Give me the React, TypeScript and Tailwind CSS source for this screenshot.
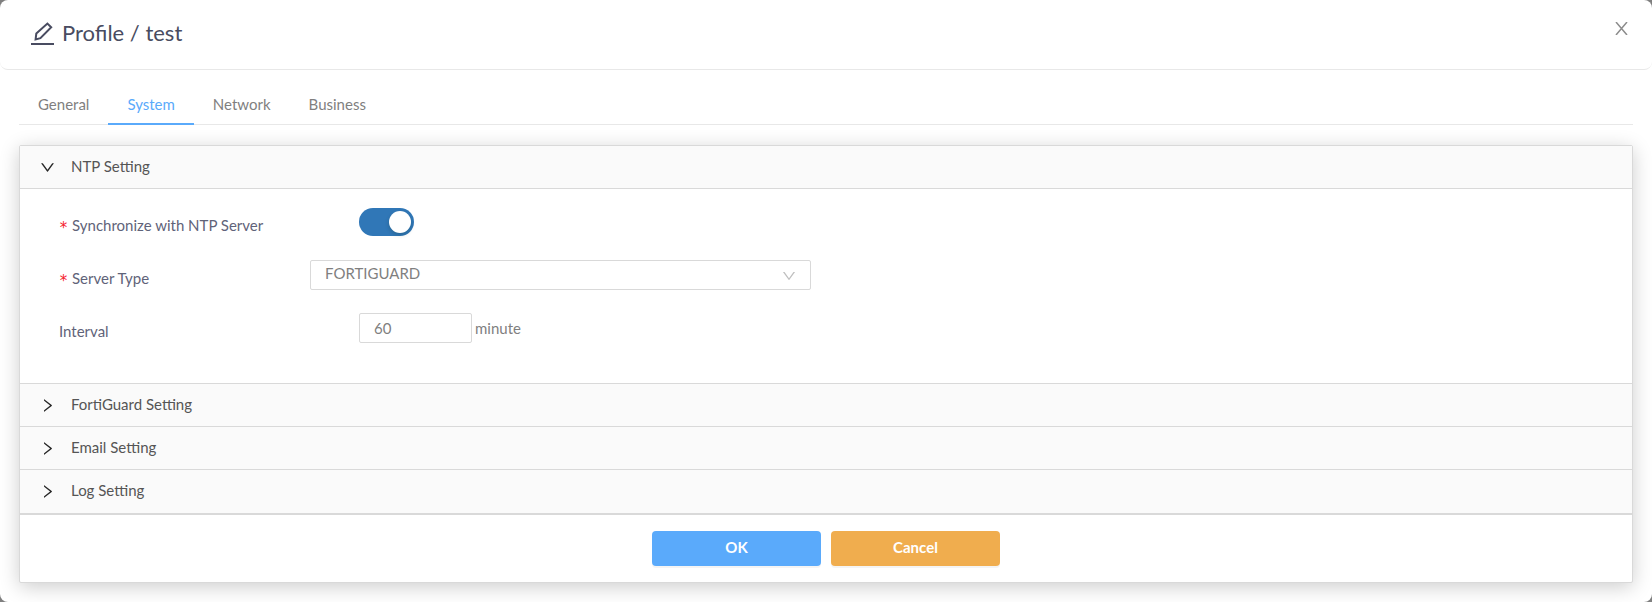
import { useState } from 'react';
import type { ReactNode } from 'react';
import { AiOutlineDown, AiOutlineRight } from 'react-icons/ai';
import clsx from 'clsx';

const TABS = ['General', 'System', 'Network', 'Business'];

function PencilIcon() {
  return (
    <svg viewBox="0 0 23 23" fill="none" stroke="currentColor" strokeWidth="2" className="size-[23px]" aria-hidden="true">
      <path d="M4.6 17.4 5.3 11.6 16.4 1.5l3.8 3.7L9.4 16.2z" />
      <path d="M0 22h23" />
    </svg>
  );
}

function CloseIcon() {
  return (
    <svg viewBox="0 0 13 13" fill="none" stroke="currentColor" strokeWidth="1.5" className="size-[13px]" aria-hidden="true">
      <path d="M1 0 12 13M12 0 1 13" />
    </svg>
  );
}

interface PanelProps {
  title: string;
  open: boolean;
  onToggle: () => void;
  children?: ReactNode;
}

function Panel({ title, open, onToggle, children }: PanelProps) {
  const Arrow = open ? AiOutlineDown : AiOutlineRight;

  return (
    <section className="border-b border-[#d9d9d9] bg-[#fafafa] last:pb-px">
      <h2>
        <button
          type="button"
          aria-expanded={open}
          onClick={onToggle}
          className="flex h-[42px] w-full items-center gap-[15px] pl-[19px] text-left text-[#555555]"
        >
          <Arrow className="size-[17px] text-[#262626]" />
          <span className="pb-[3px]">{title}</span>
        </button>
      </h2>
      {open && children && (
        <div className="border-t border-[#d9d9d9] bg-white px-[39px] pt-[18px] pb-10">{children}</div>
      )}
    </section>
  );
}

interface FieldProps {
  id: string;
  label: string;
  required?: boolean;
  wide?: boolean;
  children: ReactNode;
}

function Field({ id, label, required, wide, children }: FieldProps) {
  return (
    <div className="flex items-center">
      <label
        htmlFor={id}
        className={clsx('flex shrink-0 items-center pt-[6px] text-[#5f6379]', wide ? 'w-[251px]' : 'w-[300px]')}
      >
        {required && (
          <span className="mr-1 pt-[6px] font-['DejaVu_Sans_Mono',monospace] text-[15px] leading-[18px] text-[#f5222d]">*</span>
        )}
        {label}
      </label>
      {children}
    </div>
  );
}

export default function App() {
  const [tab, setTab] = useState('System');
  const [openPanel, setOpenPanel] = useState('NTP Setting');
  const [sync, setSync] = useState(true);

  const panelProps = (title: string) => ({
    title,
    open: openPanel === title,
    onToggle: () => setOpenPanel(openPanel === title ? '' : title),
  });

  return (
    <div className="min-h-screen bg-[#7f7f7f] font-[Lato,'Liberation_Sans',sans-serif] text-[15px] leading-6 text-[#7f7f7f]">
      <div role="dialog" aria-labelledby="title" className="min-h-screen rounded-lg bg-white pb-[19px]">
        <header className="flex h-[70px] items-start justify-between rounded-lg border-b border-[#e8e8e8] pr-6 pl-[31px]">
          <h1 id="title" className="flex items-center gap-2 pt-[17px] text-[22px] leading-8 text-[#494c61]">
            <PencilIcon />
            Profile / test
          </h1>
          <button type="button" aria-label="Close" className="mt-[22px] text-[#8c8c8c]">
            <CloseIcon />
          </button>
        </header>

        <div className="px-[19px] pt-[10px]">
          <div role="tablist" className="flex border-b border-[#e8e8e8]">
            {TABS.map((name) => (
              <button
                key={name}
                type="button"
                role="tab"
                aria-selected={tab === name}
                onClick={() => setTab(name)}
                className={clsx(
                  '-mb-px h-[45px] border-b-2 px-[19px] pt-1',
                  tab === name ? 'border-[#5aaafb] text-[#5aaafb]' : 'border-transparent',
                )}
              >
                {name}
              </button>
            ))}
          </div>

          <form
            onSubmit={(e) => e.preventDefault()}
            className="mt-5 rounded-xs border border-[#d9d9d9] bg-white shadow-[0_4px_20px_rgba(0,0,0,0.2)]"
          >
            <div className="border-b border-[#d9d9d9]">
              <Panel {...panelProps('NTP Setting')}>
                <div className="flex flex-col gap-[23px]">
                  <Field id="sync" label="Synchronize with NTP Server" required>
                    <input
                      id="sync"
                      type="checkbox"
                      role="switch"
                      checked={sync}
                      onChange={(e) => setSync(e.target.checked)}
                      className="flex h-7 w-[55px] appearance-none items-center rounded-full bg-[#bfbfbf] px-[3px] before:size-[22px] before:rounded-full before:bg-white before:shadow-[0_2px_4px_rgba(0,35,11,0.2)] checked:justify-end checked:bg-[#3077b7]"
                    />
                  </Field>
                  <Field id="server-type" label="Server Type" required wide>
                    <div className="relative w-[501px]">
                      <select
                        id="server-type"
                        className="block h-[30px] w-full appearance-none rounded-xs border border-[#d9d9d9] bg-white pr-8 pb-1 pl-[14px]"
                      >
                        <option>FORTIGUARD</option>
                        <option>CUSTOM</option>
                      </select>
                      <AiOutlineDown className="pointer-events-none absolute top-2 right-[14px] size-4 text-[#bfbfbf]" />
                    </div>
                  </Field>
                  <Field id="interval" label="Interval">
                    <input
                      id="interval"
                      type="text"
                      defaultValue="60"
                      className="mr-[3px] h-[30px] w-[113px] rounded-xs border border-[#d9d9d9] px-[14px]"
                    />
                    minute
                  </Field>
                </div>
              </Panel>
              <Panel {...panelProps('FortiGuard Setting')} />
              <Panel {...panelProps('Email Setting')} />
              <Panel {...panelProps('Log Setting')} />
            </div>

            <div className="flex justify-center gap-[10px] py-4 font-bold text-white">
              <button
                type="submit"
                className="h-[35px] w-[169px] rounded bg-[#5aaafb] pb-1 shadow-[0_2px_0_rgba(0,0,0,0.045)]"
              >
                OK
              </button>
              <button
                type="button"
                className="h-[35px] w-[169px] rounded bg-[#f0ad4e] pb-1 shadow-[0_2px_0_rgba(0,0,0,0.045)]"
              >
                Cancel
              </button>
            </div>
          </form>
        </div>
      </div>
    </div>
  );
}
